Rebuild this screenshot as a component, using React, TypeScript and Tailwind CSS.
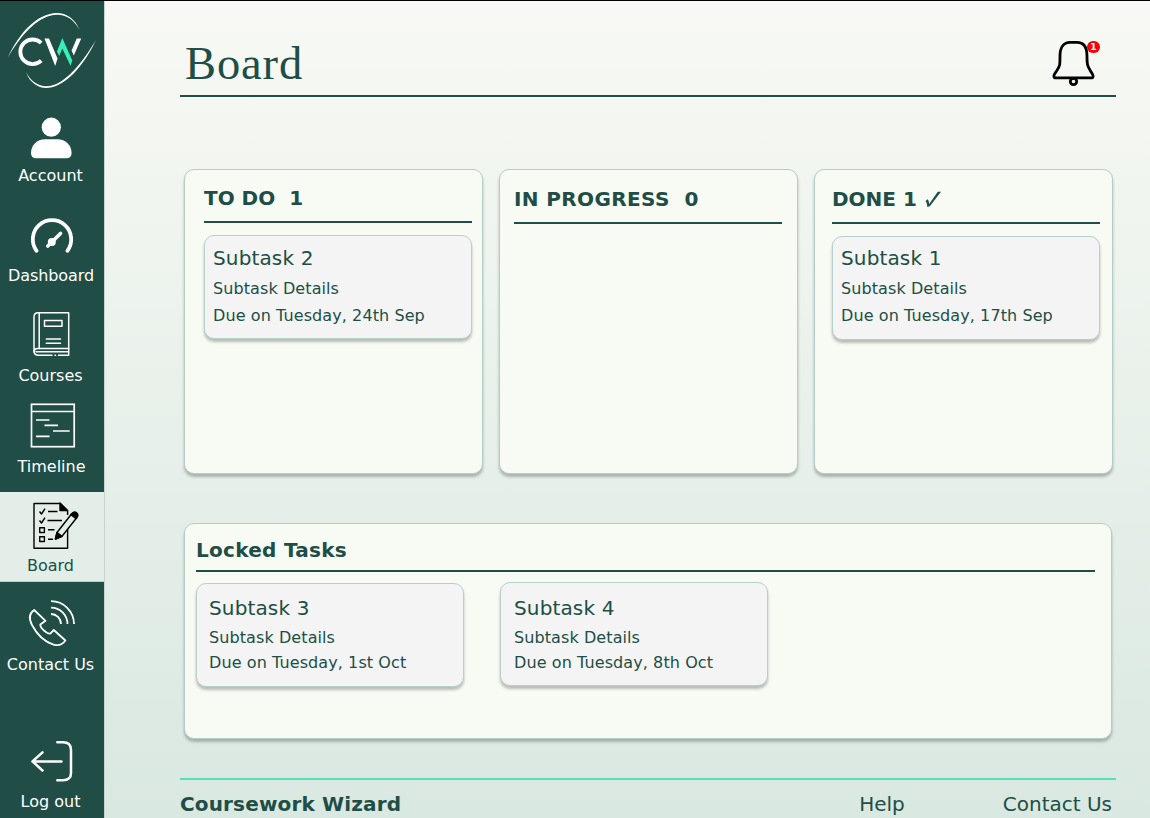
import type { ReactNode } from "react";

function NavItem({ label, top, height, className = "text-white", spacing = "-ml-[3px]", children }: {
  label: string;
  top: number;
  height: number;
  className?: string;
  spacing?: string;
  children: ReactNode;
}) {
  return (
    <a className={`flex flex-col items-center ${className}`}>
      <svg width="104" height={height} viewBox={`0 ${top} 104 ${height}`} fill="none" stroke="currentColor" className="block shrink-0">
        {children}
      </svg>
      <span className={`whitespace-nowrap text-[16px] leading-5 ${spacing}`}>{label}</span>
    </a>
  );
}

function Sidebar() {
  return (
    <nav className="flex w-[104px] shrink-0 flex-col bg-[#204e46]">
      <svg width="104" height="99" viewBox="0 1 104 99" fill="none" className="block shrink-0">
        <g fill="#fff">
          <path d="M8 57C17 38 31 19 49 14.200C62 10.500 74 16 79.500 30C73 17 62 12.300 50 15.700C33 20.500 19 39 8 57Z" />
          <path d="M96 40C87 59 73 79 56 86C43 91 31 86 26 72C32 84 43 89 55 84.500C71 78 85 58 96 40Z" />
        </g>
        <path d="M41.200 43A12.300 12.300 0 1 0 41.200 60.600" stroke="#fff" strokeWidth="3.800" />
        <path d="M44.500 38.500H49L57.500 58.500L55.200 66Z" fill="#fff" />
        <path d="M76.800 38.500H81.200L73.800 55.500L71.600 50.500Z" fill="#fff" />
        <path d="M57 51.500L62.300 38L72.300 60.500L70.500 65.800L62.300 48.500L59.200 56Z" fill="#38efb9" />
      </svg>

      <NavItem label="Account" top={100} height={66}>
        <g fill="currentColor" stroke="none">
          <circle cx="51.300" cy="127.200" r="9.600" />
          <path d="M31 153C31 145 37 139.200 45 139.200H57.500C65.500 139.200 71.600 145 71.600 153C71.600 156.500 69.700 158.300 66.500 158.300H36C32.800 158.300 31 156.500 31 153Z" />
        </g>
      </NavItem>

      <NavItem label="Dashboard" top={186} height={80} spacing="-ml-[2px] tracking-[-0.08px]">
        <path d="M36.600 250.800A19.200 19.200 0 1 1 67.400 250.800" strokeWidth="3.800" strokeLinecap="round" />
        <path d="M47.800 246L60.500 233.500" strokeWidth="3.600" strokeLinecap="round" />
        <circle cx="51.800" cy="242" r="4" fill="currentColor" stroke="none" />
      </NavItem>

      <NavItem label="Courses" top={286} height={80}>
        <g strokeWidth="1.500" strokeLinecap="round" strokeLinejoin="round">
          <path d="M38 312.700H68.700V348.500H38C35.500 348.500 34 350 34 352V317C34 314 35.500 312.700 38 312.700Z" />
          <path d="M39.200 313V348.500" />
          <path d="M34 351C34 353.500 35.500 355.200 38.500 355.200H52M58.500 355.200H68.700V348.500M55 355.200H55.500M36 351.800H68" />
          <rect x="44.500" y="320.400" width="17.500" height="5.800" />
          <path d="M46.300 339H60.500M46.300 343.200H60.500" />
        </g>
      </NavItem>

      <NavItem label="Timeline" top={386} height={71} spacing="-ml-[1px]">
        <rect x="31.500" y="404.300" width="42.700" height="42.400" strokeWidth="1.700" />
        <path d="M31 411.500H75M36 420H49.500M44.500 425.400H58M53 431H69.700M36 436.300H49.500" strokeWidth="1.700" />
      </NavItem>

      <div className="mt-[15px] h-[90px] border-b border-[#b3d1ca] bg-[#e4eee8]">
        <NavItem label="Board" top={492} height={64} className="text-[#204e46]">
          <g stroke="#000" strokeWidth="1.400" strokeLinejoin="round">
            <path d="M60 503.500H34V548.200H67.600V529M60 503.500L67.600 511V515" />
            <path d="M60 503L67.600 510.500H60Z" fill="#000" />
            <path d="M39.500 511.500L41.500 514L45 508.700M39.500 520.500L41.500 523L45 517.700" />
            <path d="M48 511.500H57.500M47.500 520.500H62M48 529.800H54.500M48 539.200H53" />
            <rect x="39.700" y="527.800" width="4.700" height="4.700" />
            <rect x="39.700" y="536.800" width="4.700" height="4.700" />
            <path d="M57 532.500L71.500 514L76.500 518L62 536.300L55.500 539Z" fill="#e4eee8" />
            <path d="M57 532.500L62 536.300L55.300 539Z" fill="#000" />
            <path d="M71 514.600L73 512.500C75.500 511 79 514 77.500 516.700L76 518.600Z" fill="#000" />
          </g>
        </NavItem>
      </div>

      <NavItem label="Contact Us" top={582} height={73}>
        <g strokeWidth="1.800" strokeLinejoin="round">
          <path d="M34.200 610C29 613.500 28.300 618 32 625C37 634.500 45 642 53.500 644.600C58 646 62.500 644.500 65.400 640.500L53.800 630L50.500 633.400C48.500 635 40 628.500 40.300 624.500L45.500 620.800Z" />
          <path d="M51 601.200A23 23 0 0 1 74 624M51 607.600A16.500 16.500 0 0 1 67.500 624M51 614A10.200 10.200 0 0 1 61 624" />
        </g>
      </NavItem>

      <NavItem label="Log out" top={675} height={117}>
        <g strokeWidth="2.500" strokeLinecap="round" strokeLinejoin="round">
          <path d="M57.300 742.300H63C68.500 742.300 71 744.500 71 750V773C71 778 68.500 780.200 63 780.200H57.300" />
          <path d="M61.500 761.400H32.500M42.500 752.300L32.500 761.400L42.500 770.500" />
        </g>
      </NavItem>
    </nav>
  );
}

function TaskCard({ title, due, className = "", detailsClass = "mt-[9px]", dueClass = "mt-[7px]" }: {
  title: string;
  due: string;
  className?: string;
  detailsClass?: string;
  dueClass?: string;
}) {
  return (
    <article className={`h-[104px] w-[268px] shrink-0 rounded-[10px] border border-[#b8d0cb] bg-[#f4f4f4] shadow-[0_3px_3px_rgba(0,0,0,0.25)] ${className}`}>
      <h3 className="text-[20px] leading-6 tracking-[0.14px]">{title}</h3>
      <p className={`text-[16px] leading-5 tracking-[0.09px] ${detailsClass}`}>Subtask Details</p>
      <p className={`whitespace-nowrap text-[16px] leading-5 tracking-[0.09px] ${dueClass}`}>{due}</p>
    </article>
  );
}

const panel = "rounded-[10px] border border-[#b3cec8] bg-[#f8fbf4] shadow-[0_3px_3px_rgba(0,0,0,0.25)]";

function Column({ title, className, titleClass = "", children }: {
  title: ReactNode;
  className: string;
  titleClass?: string;
  children?: ReactNode;
}) {
  return (
    <section className={`h-[305px] w-[299px] ${panel} ${className}`}>
      <h2 className={`w-[268px] whitespace-pre border-b-2 border-[#204e46] pb-[11px] text-[20px] leading-6 font-bold ${titleClass}`}>{title}</h2>
      {children}
    </section>
  );
}

export default function App() {
  return (
    <div className="flex h-[818px] w-[1150px] overflow-hidden border-t border-black bg-[#204e46] font-['DejaVu_Sans',sans-serif] text-[#204e46]">
      <Sidebar />
      <main className="flex min-w-0 flex-1 flex-col border-l border-[#c5d5cd] bg-linear-to-b from-[#f8f9f4] to-[#d9e8e1] pr-[34px] pl-[75px]">
        <header className="flex h-[96px] items-start justify-between border-b-2 border-[#204e46] pl-[5px]">
          <h1 className="mt-[36px] font-['Liberation_Serif',serif] text-[46.500px] leading-[54px] tracking-[0.9px]">Board</h1>
          <div className="relative mt-[38px] mr-[14px] h-[50px] w-[52px]">
            <svg width="52" height="50" viewBox="1050 39 52 50" fill="none" stroke="#000" strokeWidth="2.800" strokeLinejoin="round" className="block">
              <path d="M1054.500 77.800C1052.500 76 1055 73.500 1056.600 71C1060 66 1060 65 1060 56C1060 47 1064 42.400 1070 42.400H1077C1083.500 42.400 1087 47 1087 56C1087 65 1087.500 66 1090.500 71C1092 73.500 1094.500 76 1092.500 77.800Z" />
              <circle cx="1073.500" cy="81.500" r="3.200" />
            </svg>
            <span className="absolute top-[2px] left-[37px] flex h-[12px] w-[13px] items-center justify-center rounded-full bg-[#f90008] text-[9px] leading-none font-bold text-white">1</span>
          </div>
        </header>

        <div className="mt-[72px] ml-[4px] flex gap-[16px]">
          <Column title="TO DO  1" className="pt-[16px] pl-[19px]">
            <TaskCard title="Subtask 2" due="Due on Tuesday, 24th Sep" className="mt-[12px] pt-[10px] pl-[8px]" />
          </Column>
          <Column title="IN PROGRESS  0" className="pt-[17px] pl-[14px]" titleClass="tracking-[0.38px]" />
          <Column
            title={<span className="flex">DONE 1<svg width="22" height="24" viewBox="0 0 22 24" className="block overflow-visible" fill="currentColor"><path d="M8.500 14L10.600 12.300C11.600 13.500 12 15 12.200 17L20.800 4.800H24L12.800 19.300L10.300 20C10.200 17.500 9.800 15.500 8.500 14Z" /></svg></span>}
            className="pt-[17px] pl-[17px]"
          >
            <TaskCard title="Subtask 1" due="Due on Tuesday, 17th Sep" className="mt-[12px] pt-[9px] pl-[8px]" />
          </Column>
        </div>

        <section className={`mt-[49px] ml-[4px] h-[216px] w-[928px] shrink-0 pt-[14px] pl-[11px] ${panel}`}>
          <h2 className="w-[899px] border-b-2 border-[#204e46] pb-[8px] text-[20px] leading-6 font-bold tracking-[0.28px]">Locked Tasks</h2>
          <div className="mt-[10px] flex items-start gap-[36px]">
            <TaskCard title="Subtask 3" due="Due on Tuesday, 1st Oct" className="mt-px pt-[12px] pl-[12px]" detailsClass="mt-[8px]" dueClass="mt-[5px]" />
            <TaskCard title="Subtask 4" due="Due on Tuesday, 8th Oct" className="pt-[13px] pl-[13px]" detailsClass="mt-[8px]" dueClass="mt-[5px]" />
          </div>
        </section>

        <footer className="mt-[39px] flex items-start border-t-2 border-[#55dfba] pt-[12px] pr-[4px] text-[20px] leading-6">
          <span className="font-bold tracking-[0.15px]">Coursework Wizard</span>
          <a className="ml-auto">Help</a>
          <a className="ml-[98px]">Contact Us</a>
        </footer>
      </main>
    </div>
  );
}
